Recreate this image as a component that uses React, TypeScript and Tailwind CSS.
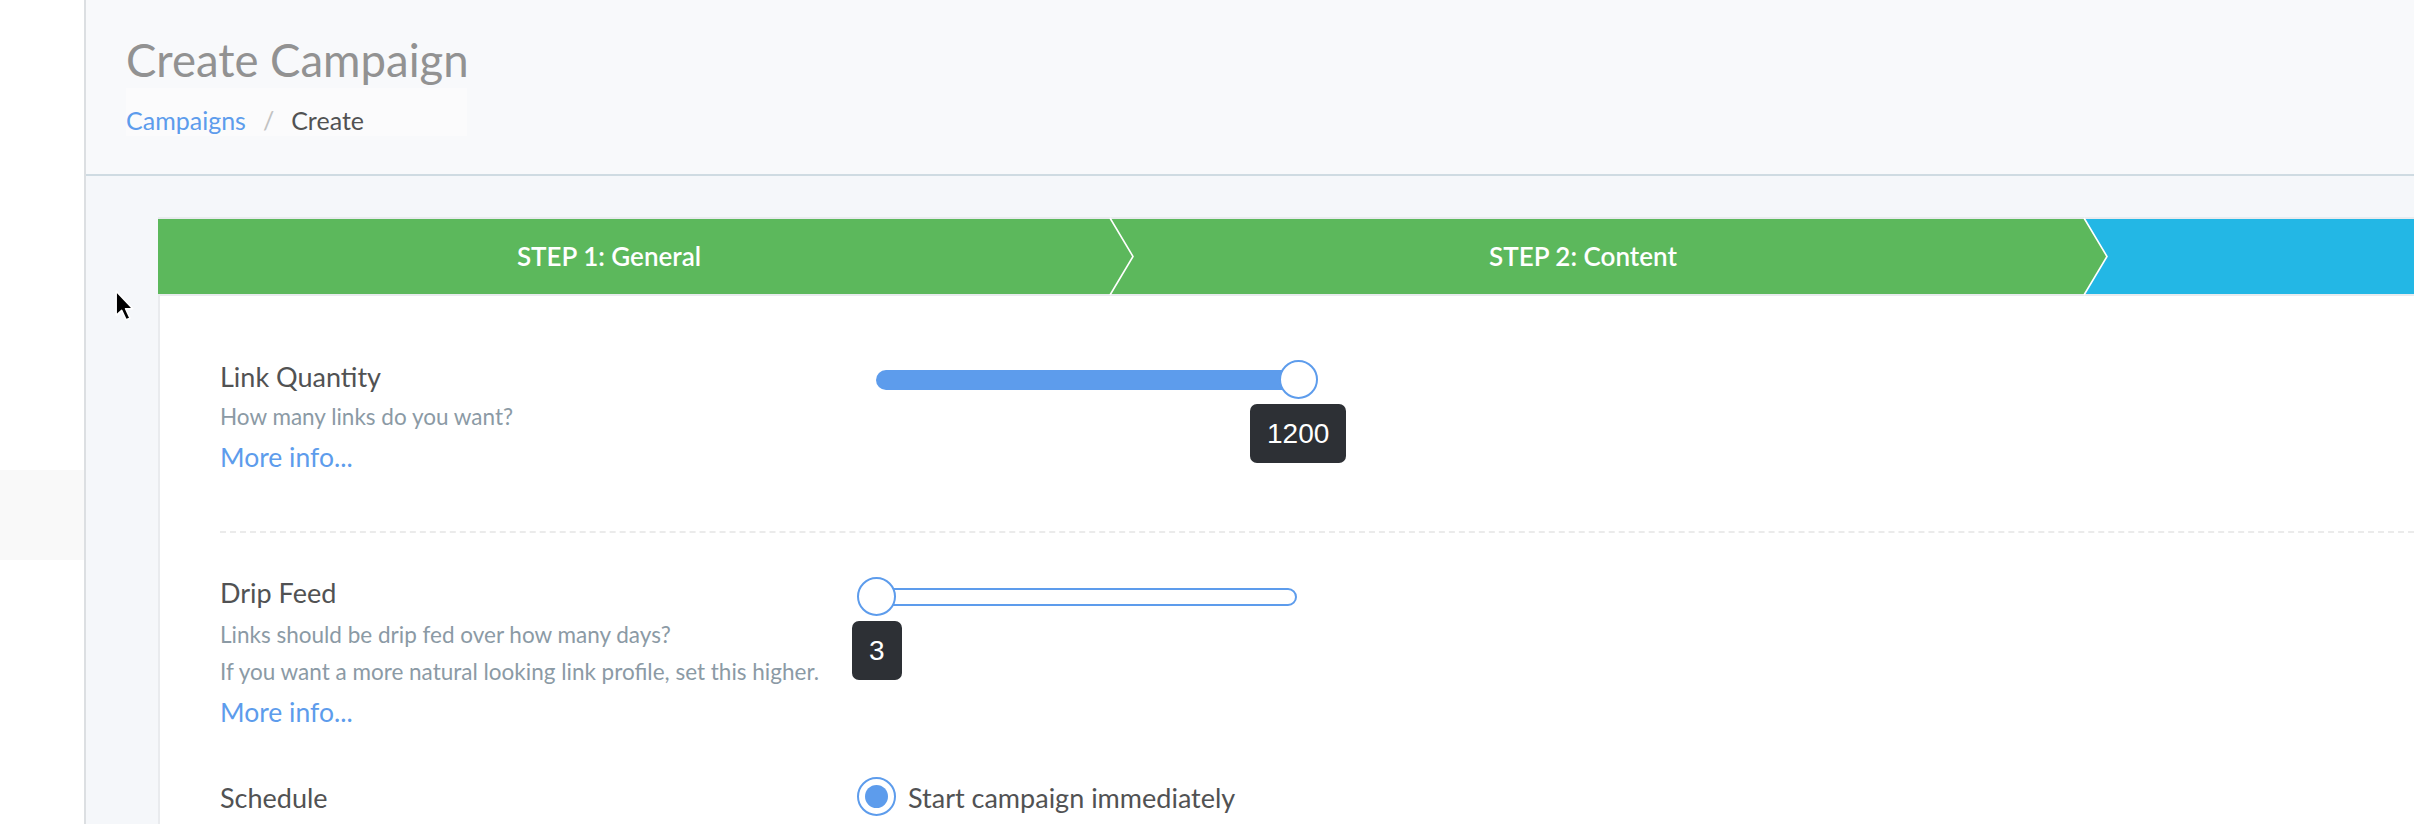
import type { ReactNode } from 'react';

const font = "font-['Lato','Source_Sans_Pro',sans-serif]";

interface StepProps {
  label: string;
  width: string;
  pad: string;
}

const Step = ({ label, width, pad }: StepProps) => (
  <div className={`relative flex h-full items-center justify-center bg-[#5cb85c] ${width} ${pad}`}>
    <span className="text-[26px] font-semibold text-white">{label}</span>
    <svg className="absolute left-full top-0 z-10 h-[75px] w-[26px] overflow-visible" viewBox="0 0 26 75">
      <polygon points="0,0 23,37.5 0,75" fill="#5cb85c" />
      <polyline points="0,-1 23,37.5 0,76" fill="none" stroke="#ffffff" strokeWidth="1.6" />
    </svg>
  </div>
);

interface SliderProps {
  value: string;
  filled: boolean;
  atEnd: boolean;
}

const Slider = ({ value, filled, atEnd }: SliderProps) => (
  <div className="relative h-[40px] w-[460px]">
    {filled ? (
      <div className="absolute left-[19px] right-[20px] top-[10px] h-[20px] rounded-full bg-[#5d9cec]" />
    ) : (
      <div className="absolute left-[19px] right-[20px] top-[11px] h-[18px] rounded-full border-2 border-[#5d9cec] bg-white" />
    )}
    <div
      className={`absolute top-0 h-[39px] w-[39px] rounded-full border-2 border-[#5d9cec] bg-white ${
        atEnd ? 'left-[422px]' : 'left-0'
      }`}
    />
    <div
      className={`absolute top-[44px] flex h-[59px] items-center rounded-[7px] bg-[#2d3035] px-[17px] font-['Liberation_Sans',Arial,sans-serif] text-[28px] text-white ${
        atEnd ? 'left-[393px]' : 'left-[-5px]'
      }`}
    >
      {value}
    </div>
  </div>
);

const Label = ({ children, className = '' }: { children: ReactNode; className?: string }) => (
  <div className={`text-[27px] leading-[42px] text-[#515253] ${className}`}>{children}</div>
);

const Help = ({ children, className = '' }: { children: ReactNode; className?: string }) => (
  <div className={`whitespace-nowrap text-[22.5px] leading-[36px] text-[#8b9aa5] ${className}`}>{children}</div>
);

const MoreInfo = ({ className = '' }: { className?: string }) => (
  <a className={`block text-[26.5px] leading-[40px] text-[#5d9cec] ${className}`}>More info...</a>
);

export default function App() {
  return (
    <div className={`relative flex h-[824px] w-[2414px] overflow-hidden bg-white ${font}`}>
      {/* sidebar strip */}
      <div className="flex w-[84px] shrink-0 flex-col bg-white pt-[470px]">
        <div className="h-[90px] bg-[#f9f9f9]" />
      </div>
      <div className="w-[2px] shrink-0 bg-[#dcdfe2]" />

      <div className="flex min-w-0 flex-1 flex-col bg-[#f5f7fa]">
        {/* header */}
        <div className="h-[176px] shrink-0 border-b-2 border-[#cfdbe2] bg-[#f8f9fb] pl-[40px] pt-[31px]">
          <h1 className="text-[45.5px] leading-[57px] text-[#929292]">Create Campaign</h1>
          <div className="w-[341px] bg-[#fbfbfc] pt-[17px] text-[25px] leading-[31px]">
            <span className="text-[#5d9cec]">Campaigns</span>
            <span className="mx-[17px] text-[#c2c2c2]">/</span>
            <span className="text-[#515253]">Create</span>
          </div>
        </div>

        {/* wizard card */}
        <div className="flex flex-1 flex-col pl-[72px] pt-[41px]">
          <div className="flex flex-1 flex-col border-t-2 border-[#e9ebee]">
            <div className="flex h-[75px] shrink-0">
              <Step label="STEP 1: General" width="w-[952px]" pad="pr-[50px]" />
              <Step label="STEP 2: Content" width="w-[974px]" pad="pr-[28px]" />
              <div className="flex-1 bg-[#23b7e5]" />
            </div>
            <div className="flex-1 border-l-2 border-t-2 border-[#e9ebee] bg-white pl-[60px]">
              {/* link quantity */}
              <div className="flex pt-[60px]">
                <div className="w-[637px] shrink-0">
                  <Label>Link Quantity</Label>
                  <Help className="mt-[1px]">How many links do you want?</Help>
                  <MoreInfo className="mt-[2px]" />
                </div>
                <div className="pt-[4px]">
                  <Slider value="1200" filled atEnd />
                </div>
              </div>

              <div className="mt-[54px] border-t-2 border-dashed border-[#ebebeb]" />

              {/* drip feed */}
              <div className="flex pt-[39px]">
                <div className="w-[637px] shrink-0">
                  <Label>Drip Feed</Label>
                  <Help className="mt-[3px]">Links should be drip fed over how many days?</Help>
                  <Help className="mt-[1px]">If you want a more natural looking link profile, set this higher.</Help>
                  <MoreInfo className="mt-[2px]" />
                </div>
                <div className="pt-[5px]">
                  <Slider value="3" filled={false} atEnd={false} />
                </div>
              </div>

              {/* schedule */}
              <div className="mt-[43px] flex">
                <div className="w-[637px] shrink-0">
                  <Label className="mt-[2px]">Schedule</Label>
                </div>
                <label className="flex h-[42px] items-center gap-[12px]">
                  <span className="flex h-[39px] w-[39px] items-center justify-center rounded-full border-2 border-[#5d9cec] bg-white">
                    <span className="h-[23px] w-[23px] rounded-full bg-[#5d9cec]" />
                  </span>
                  <span className="mt-[3px] text-[27px] leading-[42px] text-[#515253]">Start campaign immediately</span>
                </label>
              </div>
            </div>
          </div>
        </div>
      </div>

      {/* mouse pointer */}
      <svg className="absolute left-[115px] top-[290px] h-[32px] w-[20px]" viewBox="0 0 18 29">
        <polygon
          points="1,1 1,23 6,18.5 10,27 13.5,25.5 9.5,17 16,17"
          fill="#000000"
          stroke="#ffffff"
          strokeWidth="1.4"
          strokeLinejoin="round"
        />
      </svg>
    </div>
  );
}
